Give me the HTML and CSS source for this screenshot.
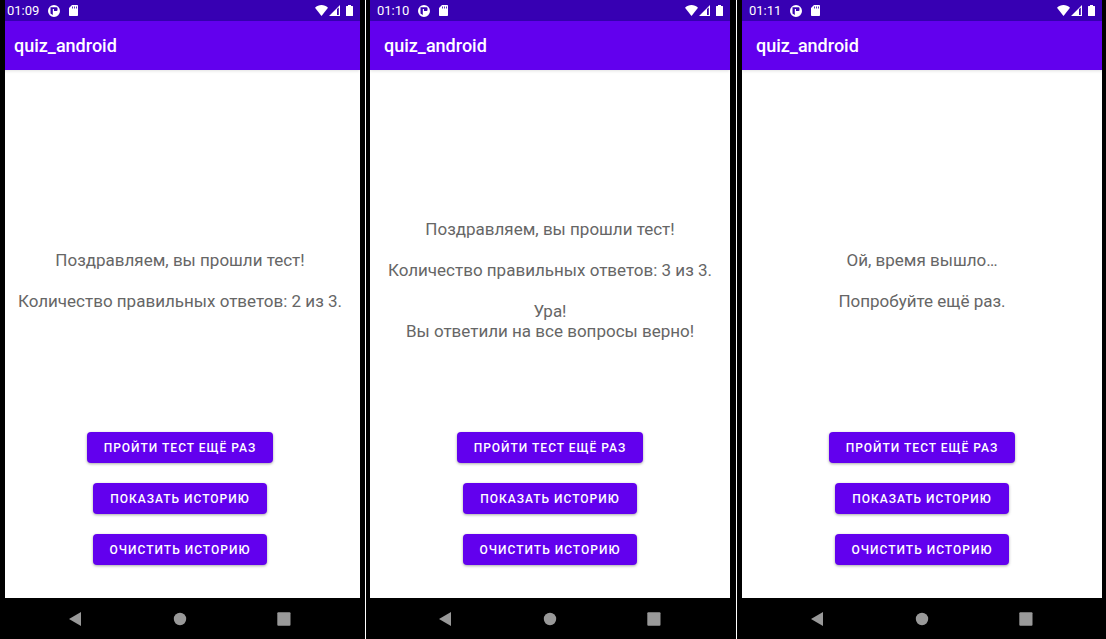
FILE: index.html
```html
<!DOCTYPE html>
<html lang="ru">
<head>
<meta charset="utf-8">
<meta name="viewport" content="width=device-width, initial-scale=1">
<title>quiz_android</title>
<link rel="stylesheet" href="styles.css">
</head>
<body>
<svg class="sprite" aria-hidden="true">
  <symbol id="i-app" viewBox="0 0 12 12"><path fill="#fff" fill-rule="evenodd" d="M6 0a6 6 0 1 1 0 12A6 6 0 0 1 6 0zM2.500 2.300V8.500L4.800 10V4H6v2h2.500a1 1 0 0 0 1-1V3.300a1 1 0 0 0-1-1z"/></symbol>
  <symbol id="i-sd" viewBox="0 0 9 11"><path fill="#fff" fill-rule="evenodd" d="M3 0h5.200a.8.8 0 0 1 .8.8v9.400a.8.8 0 0 1-.8.8H.8a.8.8 0 0 1-.8-.8V3zM3 1.500v2h.8v-2zM5 1.500v2h.8v-2zM7 1.500v2h.8v-2z"/></symbol>
  <symbol id="i-wifi" viewBox="0 0 13 11"><path fill="#fff" d="M0 2.800C3.500-.9 9.500-.9 13 2.800L6.500 11z"/></symbol>
  <symbol id="i-signal" viewBox="0 0 11 11"><path fill="#fff" fill-rule="evenodd" d="M11 0v11H0zM8 4V10H9.800V2.500z"/></symbol>
  <symbol id="i-battery" viewBox="0 0 7 11"><path fill="#fff" d="M2 0h3v1h1.500a.5.5 0 0 1 .5.500v9a.5.5 0 0 1-.5.500h-6a.5.5 0 0 1-.5-.5v-9A.5.5 0 0 1 .5 1H2z"/></symbol>
  <symbol id="i-back" viewBox="0 0 14 14"><path fill="#999" d="M12 0v14L0 7z"/></symbol>
  <symbol id="i-home" viewBox="0 0 14 14"><circle cx="7" cy="7" r="6.200" fill="#999"/></symbol>
  <symbol id="i-recent" viewBox="0 0 14 14"><rect x=".3" y=".3" width="13.200" height="13.400" rx="1" fill="#999"/></symbol>
</svg>
<main class="gallery">
  <section class="frame frame-first">
    <div class="phone">
      <div class="status"><time>01:09</time><svg class="app-icon"><use href="#i-app"/></svg><svg class="sd-icon"><use href="#i-sd"/></svg><svg class="wifi-icon"><use href="#i-wifi"/></svg><svg class="signal-icon"><use href="#i-signal"/></svg><svg class="battery-icon"><use href="#i-battery"/></svg></div>
      <header class="app-bar"><h1 class="title">quiz_android</h1></header>
      <div class="screen">
        <div class="message"><p>Поздравляем, вы прошли тест!</p><p>Количество правильных ответов: 2 из 3.</p></div>
        <div class="actions"><button class="action">Пройти тест ещё раз</button><button class="action">Показать историю</button><button class="action">Очистить историю</button></div>
      </div>
      <nav class="nav"><button class="nav-button" aria-label="Назад"><svg class="nav-icon"><use href="#i-back"/></svg></button><button class="nav-button" aria-label="Домой"><svg class="nav-icon"><use href="#i-home"/></svg></button><button class="nav-button" aria-label="Недавние"><svg class="nav-icon"><use href="#i-recent"/></svg></button></nav>
    </div>
  </section>
  <section class="frame frame-second">
    <div class="phone">
      <div class="status"><time>01:10</time><svg class="app-icon"><use href="#i-app"/></svg><svg class="sd-icon"><use href="#i-sd"/></svg><svg class="wifi-icon"><use href="#i-wifi"/></svg><svg class="signal-icon"><use href="#i-signal"/></svg><svg class="battery-icon"><use href="#i-battery"/></svg></div>
      <header class="app-bar"><h1 class="title">quiz_android</h1></header>
      <div class="screen">
        <div class="message"><p>Поздравляем, вы прошли тест!</p><p>Количество правильных ответов: 3 из 3.</p><p>Ура!<br>Вы ответили на все вопросы верно!</p></div>
        <div class="actions"><button class="action">Пройти тест ещё раз</button><button class="action">Показать историю</button><button class="action">Очистить историю</button></div>
      </div>
      <nav class="nav"><button class="nav-button" aria-label="Назад"><svg class="nav-icon"><use href="#i-back"/></svg></button><button class="nav-button" aria-label="Домой"><svg class="nav-icon"><use href="#i-home"/></svg></button><button class="nav-button" aria-label="Недавние"><svg class="nav-icon"><use href="#i-recent"/></svg></button></nav>
    </div>
  </section>
  <section class="frame frame-third">
    <div class="phone">
      <div class="status"><time>01:11</time><svg class="app-icon"><use href="#i-app"/></svg><svg class="sd-icon"><use href="#i-sd"/></svg><svg class="wifi-icon"><use href="#i-wifi"/></svg><svg class="signal-icon"><use href="#i-signal"/></svg><svg class="battery-icon"><use href="#i-battery"/></svg></div>
      <header class="app-bar"><h1 class="title">quiz_android</h1></header>
      <div class="screen">
        <div class="message"><p>Ой, время вышло…</p><p>Попробуйте ещё раз.</p></div>
        <div class="actions"><button class="action">Пройти тест ещё раз</button><button class="action">Показать историю</button><button class="action">Очистить историю</button></div>
      </div>
      <nav class="nav"><button class="nav-button" aria-label="Назад"><svg class="nav-icon"><use href="#i-back"/></svg></button><button class="nav-button" aria-label="Домой"><svg class="nav-icon"><use href="#i-home"/></svg></button><button class="nav-button" aria-label="Недавние"><svg class="nav-icon"><use href="#i-recent"/></svg></button></nav>
    </div>
  </section>
</main>
</body>
</html>
```
FILE: styles.css
```css
* { box-sizing: border-box; }
body { margin: 0; font-family: Roboto, "Noto Sans", sans-serif; background: #fff; }
.sprite { display: none; }
.gallery {
  display: grid;
  grid-template-columns: 365fr 370fr 369fr;
  gap: 1px;
  min-height: 100vh;
}
.frame { display: flex; background: #000; }
.frame-first { padding-right: 5px; }
.frame-second { padding: 0 6px 0 4px; }
.frame-third { padding: 0 4px 0 5px; }
.phone { flex: 1; min-width: 0; display: flex; flex-direction: column; }
.frame-first .phone { clip-path: inset(0 0 0 5px); }
.status {
  display: flex;
  align-items: center;
  height: 21px;
  padding: 0 7px;
  background: #3700b3;
  color: #fff;
  font-size: 13px;
  line-height: 21px;
}
.status svg { height: 11px; flex: none; }
.status .app-icon { width: 12px; height: 12px; margin-left: 9px; }
.sd-icon { width: 9px; margin-left: 9px; }
.wifi-icon { width: 13px; margin-left: auto; }
.signal-icon { width: 11px; margin-left: 1px; }
.battery-icon { width: 7px; margin-left: 6px; }
.app-bar {
  display: flex;
  align-items: center;
  height: 49px;
  padding: 0 14px;
  background: #6200ee;
  color: #fff;
  box-shadow: 0 1px 3px rgba(0, 0, 0, .12);
  z-index: 1;
}
.title { margin: 0; font-size: 18px; font-weight: 500; line-height: 24px; }
.screen { flex: 1; display: flex; flex-direction: column; padding: 58px 0 33px; background: #fff; }
.message {
  flex: 1;
  display: flex;
  flex-direction: column;
  justify-content: center;
  gap: 21px;
  color: #666;
  font-size: 17px;
  line-height: 20px;
  text-align: center;
}
.message p { margin: 0; }
.actions { display: flex; flex-direction: column; align-items: center; gap: 20px; }
.action {
  height: 31px;
  padding: 0 17px;
  border: 0;
  border-radius: 4px;
  background: #6200ee;
  color: #fff;
  font: 500 12px/16px Roboto, "Noto Sans", sans-serif;
  letter-spacing: 1px;
  text-transform: uppercase;
  box-shadow: 0 1px 3px rgba(0, 0, 0, .35);
}
.nav { display: flex; justify-content: center; gap: 90px; height: 41px; background: #000; }
.nav-button { display: flex; align-items: center; padding: 0; border: 0; background: none; }
.nav-icon { width: 14px; height: 14px; }
```
